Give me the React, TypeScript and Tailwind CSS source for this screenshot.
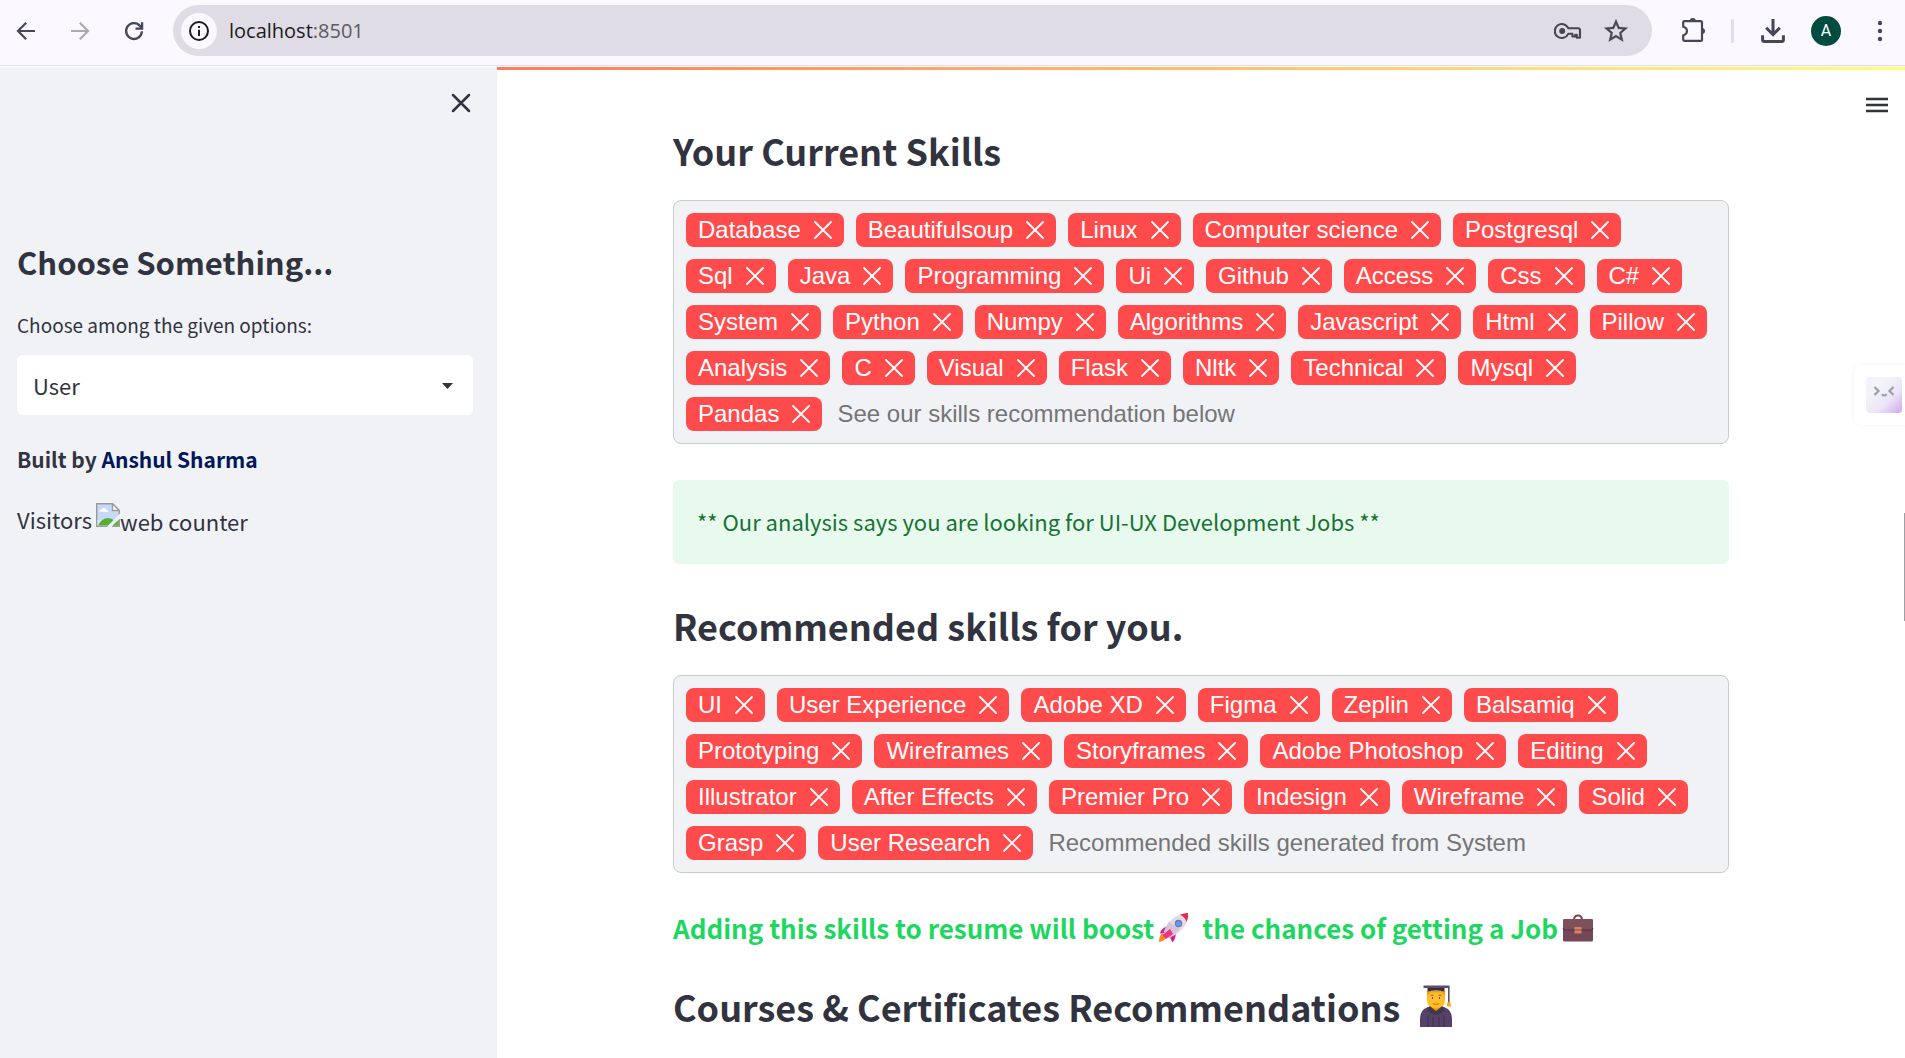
import React from "react";

const currentSkills = [
  "Database", "Beautifulsoup", "Linux", "Computer science", "Postgresql",
  "Sql", "Java", "Programming", "Ui", "Github", "Access", "Css", "C#",
  "System", "Python", "Numpy", "Algorithms", "Javascript", "Html", "Pillow",
  "Analysis", "C", "Visual", "Flask", "Nltk", "Technical", "Mysql", "Pandas",
];

const recommendedSkills = [
  "UI", "User Experience", "Adobe XD", "Figma", "Zeplin", "Balsamiq",
  "Prototyping", "Wireframes", "Storyframes", "Adobe Photoshop", "Editing",
  "Illustrator", "After Effects", "Premier Pro", "Indesign", "Wireframe", "Solid",
  "Grasp", "User Research",
];

function BackIcon() {
  return (
    <svg className="size-6" viewBox="0 0 24 24" fill="none" stroke="currentColor" strokeWidth="2.2">
      <path d="M21 12H4.5M12.2 3.8L4 12l8.2 8.2" />
    </svg>
  );
}

function ForwardIcon() {
  return (
    <svg className="size-6" viewBox="0 0 24 24" fill="none" stroke="currentColor" strokeWidth="2.2">
      <path d="M3 12h16.5M11.8 3.8L20 12l-8.2 8.2" />
    </svg>
  );
}

function ReloadIcon() {
  return (
    <svg className="size-6" viewBox="0 0 24 24" fill="none" stroke="currentColor" strokeWidth="2.3">
      <path d="M19.9 12.2A7.9 7.9 0 1 1 18 6.9l1.9 2" />
      <path d="M20.1 3.2v6.5h-6.6" />
    </svg>
  );
}

function InfoIcon() {
  return (
    <svg className="size-6" viewBox="0 0 24 24" fill="none" stroke="currentColor" strokeWidth="2">
      <circle cx="12" cy="12" r="9" />
      <path d="M12 10.8v6.2M12 7v2" />
    </svg>
  );
}

function KeyIcon() {
  return (
    <svg className="h-6 w-7" viewBox="0 0 28 24" fill="none" stroke="currentColor" strokeWidth="2.1">
      <path d="M14.2 9.2A7 7 0 1 0 14.2 14.8H18.4V17.4H21.3V15.8H22.8V18.6H26V11.2Q26 9.2 24 9.2Z" strokeLinejoin="round" />
      <circle cx="8.2" cy="12" r="3" fill="currentColor" stroke="none" />
    </svg>
  );
}

function StarIcon() {
  return (
    <svg className="size-7" viewBox="0 0 24 24" fill="currentColor" stroke="currentColor" strokeWidth="0.3">
      <path d="M22 9.24l-7.19-.62L12 2 9.19 8.63 2 9.24l5.46 4.73L5.82 21 12 17.27 18.18 21l-1.63-7.03L22 9.24zM12 15.4l-3.76 2.27 1-4.28-3.32-2.88 4.38-.38L12 6.1l1.71 4.04 4.38.38-3.32 2.88 1 4.28L12 15.4z" />
    </svg>
  );
}

function PuzzleIcon() {
  return (
    <svg className="size-7" viewBox="0 0 28 28" fill="none" stroke="currentColor" strokeWidth="2.2" strokeLinejoin="round">
      <path d="M4.2 5.2Q4.2 4.2 5.4 4.2H21.6Q23 4.2 23 5.6V22.4Q23 23.8 21.6 23.8H5.4Q4.2 23.8 4.2 22.8V18.2Q8 17.2 8 14T4.2 9.8Z" />
      <path d="M10.8 4a3 3 0 0 1 6 0ZM23 11a3 3 0 0 1 0 6Z" fill="currentColor" stroke="none" />
    </svg>
  );
}

function DownloadIcon() {
  return (
    <svg className="size-7" viewBox="0 0 28 28" fill="none" stroke="currentColor" strokeWidth="3">
      <path d="M14 2v14.5M7.2 10.8L14 17.6l6.8-6.8" />
      <path d="M3.6 18.2v4.6q0 1.7 1.7 1.7h17.4q1.7 0 1.7-1.7v-4.6" />
    </svg>
  );
}

function BrokenImageIcon() {
  return (
    <svg className="size-6 shrink-0" viewBox="0 0 24 24">
      <path d="M.7.7H16.5L23.3 7.5V23.3H.7Z" fill="#c6d9f6" stroke="#9a9a9a" strokeWidth="1.4" />
      <path d="M1.4 17L17 17V22.6H1.4Z" fill="#d9e6f8" />
      <path d="M3.4 8.5q0-2 2.1-2 .9-2 2.8-1.4 2 .3 2.1 2 2 .1 1.8 1.8Z" fill="#fff" />
      <path d="M2 22.6Q5.5 15 12 15q4 0 6 2.6L12 22.6Z" fill="#59ad35" />
      <path d="M24 10.5L11 23.9H15.5L24 15.5Z" fill="#f0f2f6" />
      <path d="M16.4 22.6L22.6 17V22.6Z" fill="#59ad35" />
      <path d="M16.5.7V7.5H23.3Z" fill="#fff" stroke="#9a9a9a" strokeWidth="1.4" />
    </svg>
  );
}

function RocketIcon() {
  return (
    <svg className="h-8 w-8" viewBox="0 0 32 32" role="img" aria-label="rocket">
      <path d="M4 21q-3 3-3 9 5-1 7.5-4Z" fill="#ff8a1c" />
      <path d="M11 14Q3.5 15 2 21.5l6-.5ZM17.5 20q1 6-3 10.5l-3-6Z" fill="#d4218e" />
      <path d="M6 20Q9 8 20 3.5q5.5-2.5 10-2.5 1 5-2 11-5 9-17 14Z" fill="#e3d9e8" />
      <path d="M6 20q2-6 5-10l11 6.5q-5 6-11 9.5Z" fill="#d3c3dc" />
      <path d="M22 2.7Q26 1 30 1q.8 4-1.3 9Q27 5 22 2.7Z" fill="#e22e4c" />
      <path d="M12 17l-7.5 6 3.5 4 7-5Z" fill="#f0357f" />
      <circle cx="20.5" cy="11.5" r="3.7" fill="#7d6ba3" />
      <circle cx="20.5" cy="11.5" r="2.6" fill="#4ba3f0" />
    </svg>
  );
}

function BriefcaseIcon() {
  return (
    <svg className="h-7 w-8" viewBox="0 0 32 28" role="img" aria-label="briefcase">
      <path d="M12 6q0-4.500 4-4.500T20 6" fill="none" stroke="#7a4a50" strokeWidth="2" />
      <rect x="1" y="5" width="30" height="22.5" rx="1.5" fill="#74465a" />
      <path d="M1 6.5Q1 5 2.5 5h27Q31 5 31 6.5V14q0 2-2.5 2h-25Q1 16 1 14Z" fill="#80505a" />
      <path d="M1 14q0 2 2.5 2h25q2.5 0 2.5-2" fill="none" stroke="#572a50" strokeWidth="1" />
      <rect x="12.5" y="13" width="7" height="6.5" rx=".5" fill="#d8845f" />
      <path d="M12.5 16h7" stroke="#8b4a48" strokeWidth="1" />
    </svg>
  );
}

function GraduateIcon() {
  return (
    <svg className="h-11 w-9" viewBox="0 0 36 44" role="img" aria-label="student">
      <path d="M2 43V35q0-9 7-11.500 5-2 9-2t9 2q7 2.500 7 11.500v8Z" fill="#564168" />
      <path d="M10 31v12M15 33v10M21 33v10M26 31v12" stroke="#433253" strokeWidth="1.2" />
      <path d="M9 24l4-2.500h10l4 2.500q-3 7-9 7T9 24Z" fill="#403947" />
      <path d="M13.5 20h9v3.5L18 27l-4.500-3.500Z" fill="#e89716" />
      <path d="M9 7h18v9q0 8-9 8t-9-8Z" fill="#ffbf24" />
      <path d="M8.7 7h18.6l-1 5-2.300-3.500H12L9.700 12Z" fill="#f29b18" />
      <path d="M12.5 11.8q1.500-1.300 3-.5M20.5 11.3q1.500-.8 3 .5" fill="none" stroke="#a65b10" strokeWidth="1" />
      <circle cx="14" cy="14" r="1.3" fill="#fff" />
      <circle cx="22" cy="14" r="1.3" fill="#fff" />
      <circle cx="14.3" cy="14" r=".9" fill="#5a3312" />
      <circle cx="21.7" cy="14" r=".9" fill="#5a3312" />
      <path d="M15.5 19q2.500 1.800 5 0v1.500h-5Z" fill="#cc3d3d" />
      <path d="M9.5 3h17v4.500q-8.500-2-17 0Z" fill="#352d42" />
      <path d="M5.5 1.5h26V4h-26Z" fill="#5b4d6e" />
      <path d="M30.8 3v16" stroke="#5b4d6e" strokeWidth="1.6" />
      <path d="M29.5 18h2.600l1.200 4.500h-4.500Z" fill="#f7a51c" />
    </svg>
  );
}

function Chip({ label }: { label: string }) {
  return (
    <span className="flex h-[34px] items-center gap-[13px] rounded-lg bg-[#ff4b4b] px-3 text-2xl leading-[34px] whitespace-nowrap text-white">
      {label}
      <button type="button" aria-label={`Remove ${label}`} className="block">
        <svg className="size-[18px]" viewBox="0 0 18 18" stroke="currentColor" strokeWidth="1.8" strokeLinecap="round">
          <path d="M1 1l16 16M17 1L1 17" />
        </svg>
      </button>
    </span>
  );
}

function TagInput({ tags, placeholder, label }: { tags: string[]; placeholder: string; label: string }) {
  return (
    <div className="flex flex-wrap gap-3 rounded-lg border border-[#c9cacc] bg-[#f0f2f6] p-3 font-['Liberation_Sans',Arial,sans-serif]">
      {tags.map((t) => (
        <Chip key={t} label={t} />
      ))}
      <input
        aria-label={label}
        placeholder={placeholder}
        className="h-[34px] min-w-[420px] flex-1 bg-transparent px-[3px] text-2xl text-[#31333f] outline-none placeholder:text-[#757575]"
      />
    </div>
  );
}

function Toolbar() {
  return (
    <header className="flex h-[66px] shrink-0 items-start border-b border-[#e0dfe9] bg-[#fbf8ff] pt-[5px] text-[#45465a]">
      <div className="flex h-[51px] flex-1 items-center">
        <nav className="flex w-[173px] items-center gap-[30px] pl-[14px]">
          <button type="button" aria-label="Back"><BackIcon /></button>
          <button type="button" aria-label="Forward" className="text-[#aba9b2]"><ForwardIcon /></button>
          <button type="button" aria-label="Reload"><ReloadIcon /></button>
        </nav>
        <div className="flex h-[51px] flex-1 items-center rounded-full bg-[#dfdce6] pr-[22px] pl-2">
          <button type="button" aria-label="Site information" className="flex size-9 items-center justify-center rounded-full bg-[#fbf8ff] text-[#1c1b20]">
            <InfoIcon />
          </button>
          <div className="ml-3 flex-1 font-['Open_Sans','Noto_Sans',sans-serif] text-[20px] leading-8 text-[#1c1b20]">
            <span>localhost</span><span className="text-[#5b5961]">:8501</span>
          </div>
          <div className="flex items-center gap-5 text-[#48464d]">
            <button type="button" aria-label="Passwords"><KeyIcon /></button>
            <button type="button" aria-label="Bookmark"><StarIcon /></button>
          </div>
        </div>
        <div className="flex w-[253px] items-center pl-[27px]">
          <button type="button" aria-label="Extensions"><PuzzleIcon /></button>
          <span className="ml-6 h-6 w-[3px] rounded-full bg-[#dddcff]" />
          <button type="button" aria-label="Downloads" className="ml-[25px]"><DownloadIcon /></button>
          <button type="button" aria-label="Profile" className="ml-6 flex size-[30px] items-center justify-center rounded-full bg-[#004d40] font-['Roboto',sans-serif] text-base text-white">
            A
          </button>
          <button type="button" aria-label="Menu" className="ml-[34px]">
            <svg className="h-6 w-[10px]" viewBox="0 0 10 24" fill="currentColor">
              <circle cx="5" cy="4" r="2.2" />
              <circle cx="5" cy="12" r="2.2" />
              <circle cx="5" cy="20" r="2.2" />
            </svg>
          </button>
        </div>
      </div>
    </header>
  );
}

function Sidebar() {
  return (
    <aside className="w-[497px] shrink-0 bg-[#f0f2f6] pt-6 pr-6 pl-[17px]">
      <div className="flex justify-end">
        <button type="button" aria-label="Close sidebar" className="block">
          <svg className="size-6" viewBox="0 0 24 24" stroke="currentColor" strokeWidth="2.5" strokeLinecap="round">
            <path d="M4 4l16 16M20 4L4 20" />
          </svg>
        </button>
      </div>
      <h2 className="mt-[127px] text-[31px] leading-10 font-semibold">Choose Something...</h2>
      <label htmlFor="role" className="mt-[29px] block text-[19px] leading-7">Choose among the given options:</label>
      <div className="relative mt-4">
        <select id="role" className="h-[60px] w-full appearance-none rounded-md bg-white px-4 pb-px text-[22px] leading-8">
          <option>User</option>
          <option>Admin</option>
        </select>
        <svg className="pointer-events-none absolute top-7 right-5 h-[6px] w-[11px]" viewBox="0 0 11 6" fill="currentColor">
          <path d="M0 0h11L5.5 6Z" />
        </svg>
      </div>
      <p className="mt-7 text-[21px] leading-8 font-semibold">
        Built by <a href="#author" className="text-[#021659]">Anshul Sharma</a>
      </p>
      <p className="mt-7 flex items-start text-[22px] leading-8">
        <span>Visitors</span>
        <span className="ml-1 flex items-start">
          <BrokenImageIcon />
          <span className="mt-[2px]">web counter</span>
        </span>
      </p>
    </aside>
  );
}

export default function App() {
  return (
    <div className="flex min-h-screen flex-col bg-white font-['Noto_Sans_CJK_JP','Noto_Sans_CJK_SC',sans-serif] text-[#31333f]">
      <Toolbar />
      <div className="relative mt-px flex flex-1">
        <Sidebar />
        <main className="relative min-w-0 flex-1">
          <div className="h-[3px] bg-linear-to-r from-[#ff7a5c] to-[#fffd80]" />
          <button type="button" aria-label="Main menu" className="absolute top-[30px] right-4">
            <svg className="h-4 w-6" viewBox="0 0 24 16" stroke="currentColor" strokeWidth="2.5">
              <path d="M1 2h22M1 8h22M1 14h22" />
            </svg>
          </button>
          <div className="px-44 pt-[58px] pb-6">
            <h1 className="text-4xl leading-[44px] font-semibold">Your Current Skills</h1>
            <div className="mt-7">
              <TagInput tags={currentSkills} label="Your current skills" placeholder="See our skills recommendation below" />
            </div>
            <div role="alert" className="mt-9 flex h-[84px] items-center rounded-md bg-[#e8f9ee] px-6 pb-[3px] text-[22px] leading-8 text-[#177233]">
              ** Our analysis says you are looking for UI-UX Development Jobs **
            </div>
            <h1 className="mt-[39px] text-4xl leading-[44px] font-semibold">Recommended skills for you.</h1>
            <div className="mt-7">
              <TagInput tags={recommendedSkills} label="Recommended skills" placeholder="Recommended skills generated from System" />
            </div>
            <h4 className="mt-[39px] flex h-8 items-center text-[26px] leading-8 font-semibold whitespace-nowrap text-[#1ed760]">
              <span>Adding this skills to resume will boost</span>
              <span className="mx-1"><RocketIcon /></span>
              <span className="ml-2">the chances of getting a Job</span>
              <span className="ml-1"><BriefcaseIcon /></span>
            </h4>
            <h1 className="mt-10 flex h-11 items-center text-4xl leading-[44px] font-semibold whitespace-nowrap">
              <span>Courses &amp; Certificates Recommendations</span>
              <span className="ml-[18px]"><GraduateIcon /></span>
            </h1>
          </div>
        </main>
        <button type="button" aria-label="Open assistant" className="absolute top-[298px] right-0 flex h-[60px] w-[51px] items-center rounded-l-lg bg-white pl-3 shadow-[0_0_5px_rgba(0,0,0,0.06)]">
          <svg className="size-9" viewBox="0 0 36 36" fill="none">
            <defs>
              <linearGradient id="face" x1="0.3" y1="0.3" x2="1" y2="1">
                <stop offset="0" stopColor="#f1f5f9" />
                <stop offset="0.5" stopColor="#ebe4f8" />
                <stop offset="1" stopColor="#cfa5ee" />
              </linearGradient>
            </defs>
            <rect width="36" height="36" rx="4" fill="url(#face)" />
            <path d="M8.5 10l4 4-4 4M27.5 10l-4 4 4 4M16 17.2q2.200 2.600 4.600 0" stroke="#9b9fa6" strokeWidth="2.2" />
          </svg>
        </button>
        <div className="absolute top-[446px] right-0 h-[108px] w-px bg-[#9d9fa5]" />
      </div>
    </div>
  );
}
